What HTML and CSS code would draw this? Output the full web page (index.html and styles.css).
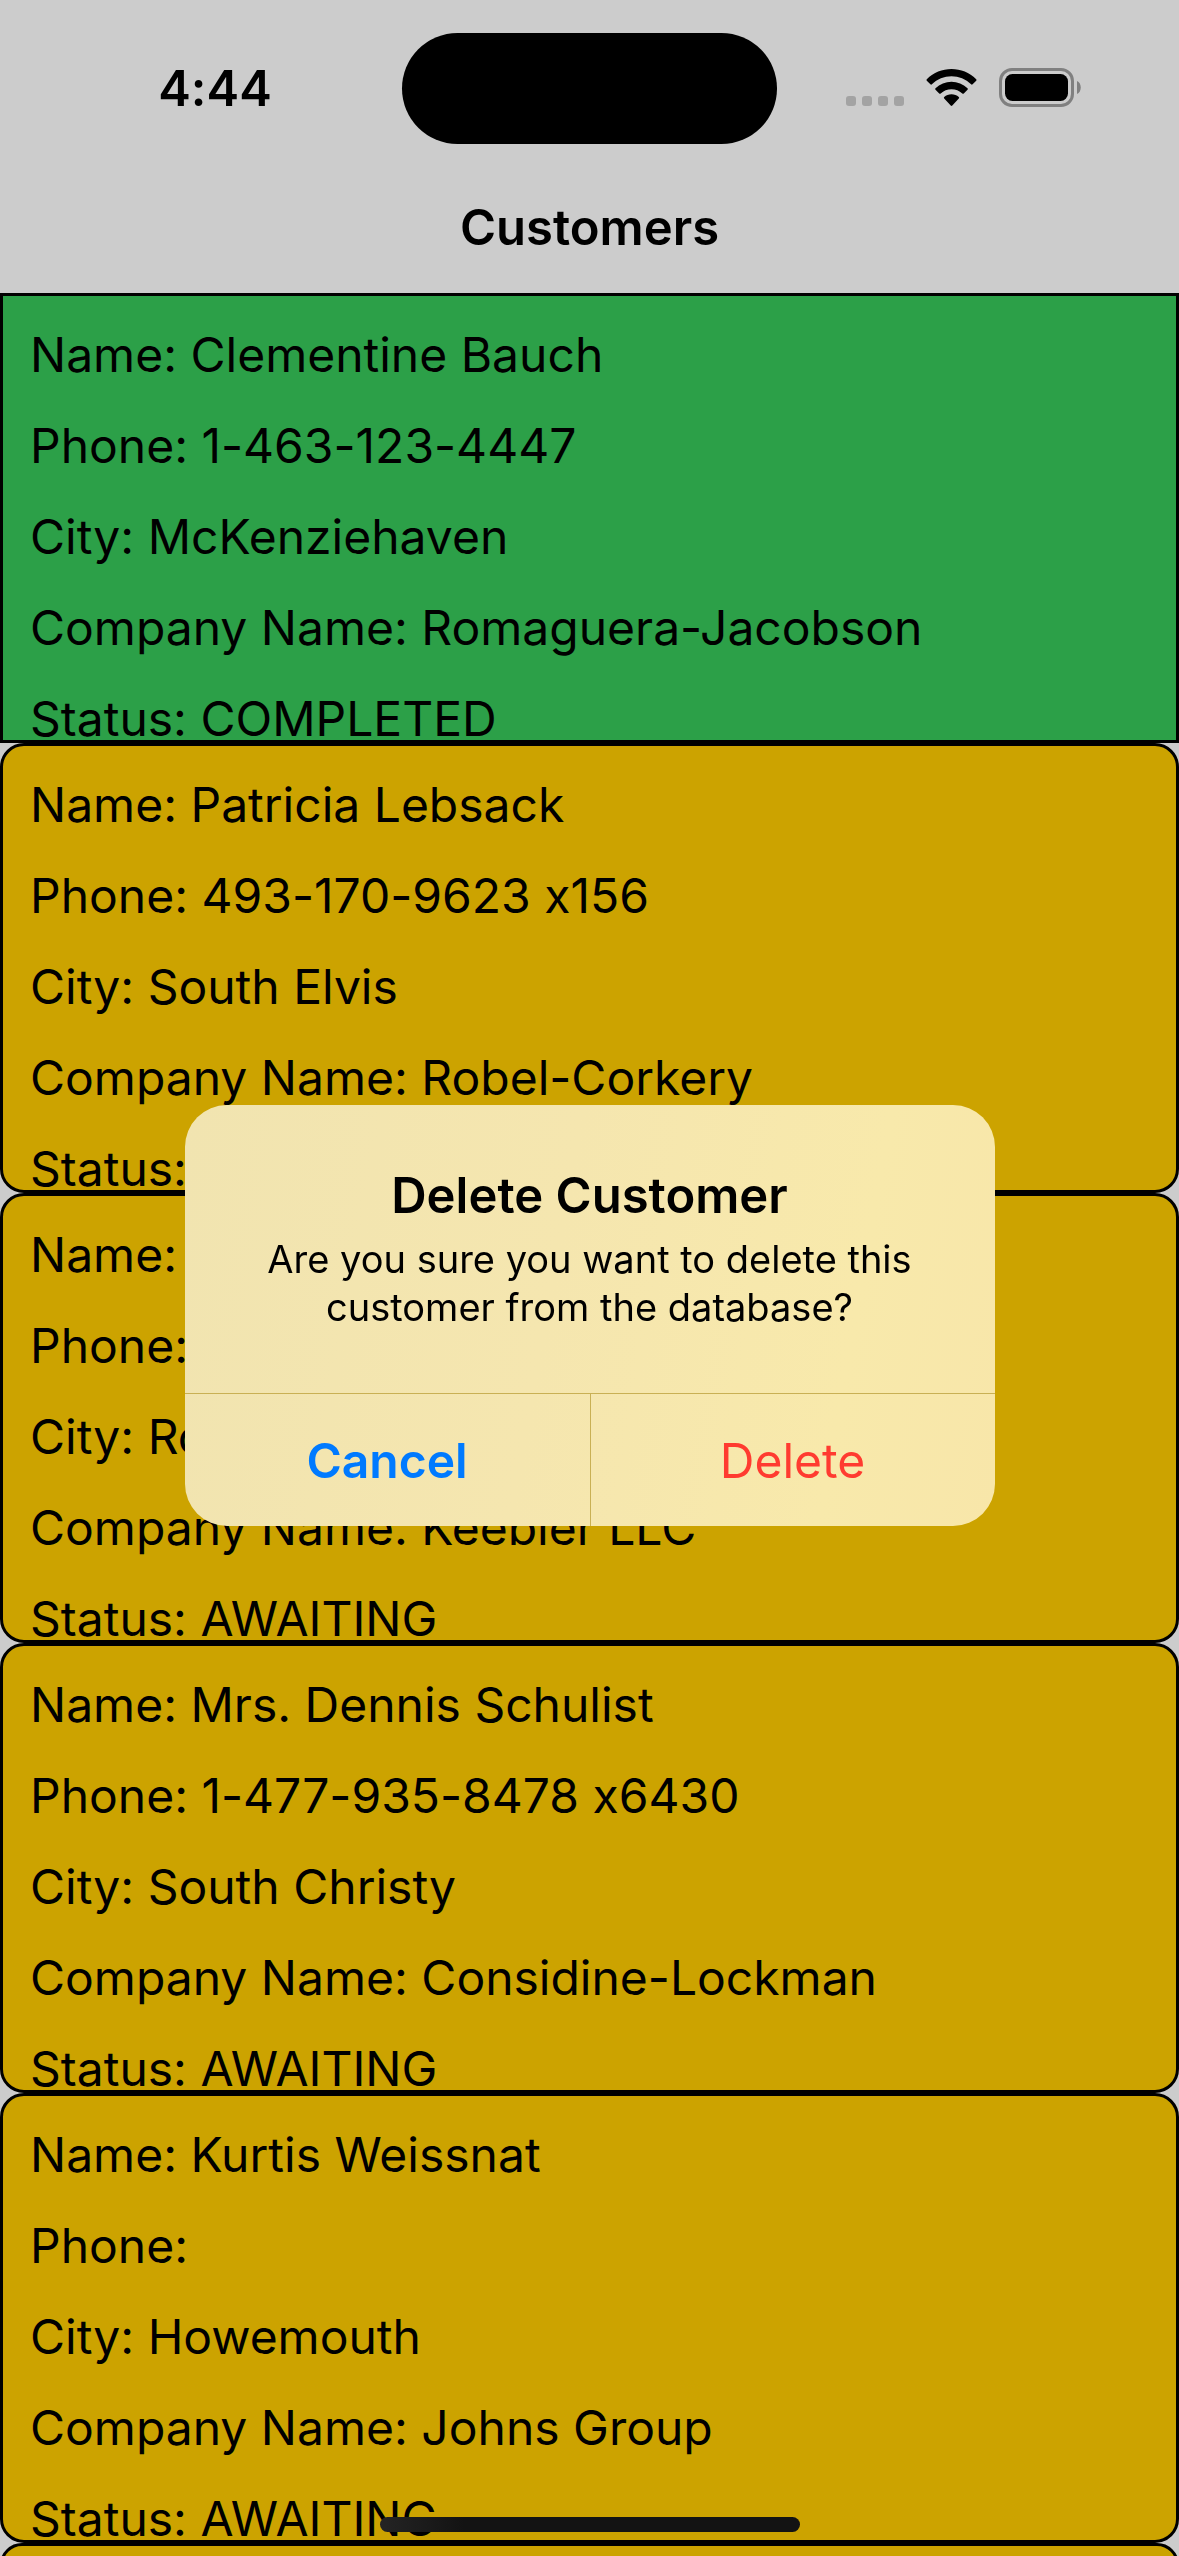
FILE: index.html
```html
<!DOCTYPE html>
<html lang="en">
<head>
<meta charset="utf-8">
<meta name="viewport" content="width=device-width, initial-scale=1">
<title>Customers</title>
<link rel="stylesheet" href="styles.css">
</head>
<body>
<div class="screen">
  <div class="status-bar">
    <time class="clock">4:44</time>
    <div class="island"></div>
    <div class="indicators">
      <svg width="58" height="39" viewBox="0 0 58 39" fill="#a3a3a3" aria-hidden="true">
        <rect x="0" y="28" width="10" height="10" rx="3"/>
        <rect x="16" y="28" width="10" height="10" rx="3"/>
        <rect x="32" y="28" width="10" height="10" rx="3"/>
        <rect x="48" y="28" width="10" height="10" rx="3"/>
      </svg>
      <svg width="51" height="39" viewBox="0 0 51 39" aria-hidden="true">
        <path d="M.8 11.2C7.6 4.6 16.2 1 25.5 1s17.900 3.600 24.700 10.200c.5.500.5 1.100 0 1.600L46.600 16.300c-.5.500-1 .5-1.500 0C39.700 11.200 32.900 8.300 25.500 8.300S11.300 11.200 5.900 16.300c-.5.500-1 .5-1.500 0L.8 12.800c-.5-.5-.5-1.100 0-1.600z"/>
        <path d="M9.500 20.200C13.900 16.100 19.500 13.800 25.500 13.800s11.600 2.300 16 6.400c.5.500.5 1 0 1.500l-3.700 3.700c-.5.500-1 .5-1.500 0C33.400 22.700 29.600 21.200 25.500 21.200s-7.900 1.500-10.800 4.200c-.5.500-1 .5-1.500 0L9.500 21.700c-.5-.5-.5-1 0-1.500z"/>
        <path d="M18.200 29C20.200 27.200 22.700 26.200 25.500 26.200s5.300 1 7.300 2.800c.5.500.5 1 0 1.500l-6.500 7c-.5.500-1.100.5-1.600 0l-6.500-7c-.5-.5-.5-1 0-1.500z"/>
      </svg>
      <svg width="82" height="39" viewBox="0 0 82 39" aria-hidden="true">
        <rect x="1.500" y="1.500" width="72" height="36" rx="11.500" fill="none" stroke="#808080" stroke-width="3"/>
        <rect x="6" y="6" width="63" height="27" rx="7.500"/>
        <path d="M78 13c5 2 5 11 0 13z" fill="#808080"/>
      </svg>
    </div>
  </div>
  <header class="nav-bar">
    <h1 class="nav-title">Customers</h1>
  </header>
  <ul class="customers">
    <li class="card card-completed">
      <p>Name: Clementine Bauch</p>
      <p>Phone: 1-463-123-4447</p>
      <p>City: McKenziehaven</p>
      <p>Company Name: Romaguera-Jacobson</p>
      <p>Status: COMPLETED</p>
    </li>
    <li class="card">
      <p>Name: Patricia Lebsack</p>
      <p>Phone: 493-170-9623 x156</p>
      <p>City: South Elvis</p>
      <p>Company Name: Robel-Corkery</p>
      <p>Status:</p>
    </li>
    <li class="card">
      <p>Name:</p>
      <p>Phone:</p>
      <p>City: Ro</p>
      <p>Company Name: Keebler LLC</p>
      <p>Status: AWAITING</p>
    </li>
    <li class="card">
      <p>Name: Mrs. Dennis Schulist</p>
      <p>Phone: 1-477-935-8478 x6430</p>
      <p>City: South Christy</p>
      <p>Company Name: Considine-Lockman</p>
      <p>Status: AWAITING</p>
    </li>
    <li class="card">
      <p>Name: Kurtis Weissnat</p>
      <p>Phone:</p>
      <p>City: Howemouth</p>
      <p>Company Name: Johns Group</p>
      <p>Status: AWAITING</p>
    </li>
    <li class="card"></li>
  </ul>
</div>
<div class="overlay">
  <section class="alert" role="alertdialog" aria-labelledby="alert-title" aria-describedby="alert-message">
    <div class="alert-body">
      <h2 class="alert-title" id="alert-title">Delete Customer</h2>
      <p class="alert-message" id="alert-message">Are you sure you want to delete this customer from the database?</p>
    </div>
    <div class="alert-actions">
      <button class="action action-cancel" type="button">Cancel</button>
      <button class="action action-delete" type="button">Delete</button>
    </div>
  </section>
</div>
<div class="home-indicator"></div>
</body>
</html>
```

FILE: styles.css
```css
* {
  box-sizing: border-box;
}

body,
h1,
h2,
p,
ul {
  margin: 0;
  padding: 0;
}

body {
  background: #cccccc;
  color: #000;
  font-family: Inter, "Liberation Sans", sans-serif;
  font-size: 48px;
  font-feature-settings: "calt" 0;
}

.screen {
  display: flex;
  flex-direction: column;
  height: 100vh;
  overflow: hidden;
}

.status-bar {
  display: grid;
  grid-template-columns: 1fr 375px 1fr;
  align-items: center;
  flex: none;
  height: 177px;
}

.clock {
  padding-left: 28px;
  font-size: 49px;
  font-weight: 600;
  text-align: center;
}

.island {
  height: 111px;
  border-radius: 56px;
  background: #000;
}

.indicators {
  display: flex;
  justify-content: center;
  gap: 22px;
  padding: 0 30px 2px 0;
}

.nav-bar {
  flex: none;
  padding-bottom: 14px;
}

.nav-title {
  font-size: 49px;
  font-weight: 600;
  line-height: 102px;
  text-align: center;
}

.customers {
  flex: 1;
  min-height: 0;
  overflow: hidden;
  list-style: none;
}

.card {
  display: grid;
  gap: 49px;
  padding: 38px 27px 0;
  border: 3px solid #000;
  border-radius: 24px;
  background: #cca300;
  line-height: 42px;
  white-space: nowrap;
}

.card-completed {
  border-radius: 0;
  background: #2ca048;
}

.overlay {
  position: fixed;
  inset: 0;
  display: flex;
  align-items: center;
  justify-content: center;
  padding: 177px 48px 102px;
}

.alert {
  width: 100%;
  max-width: 810px;
  overflow: hidden;
  border-radius: 42px;
  background: linear-gradient(100deg, #f1e4b0, #f5e6af 45%, #f8e9ab 80%, #f8e6a9);
  text-align: center;
}

.alert-body {
  padding: 60px 48px 62px;
}

.alert-title {
  font-size: 49px;
  font-weight: 600;
  line-height: 62px;
}

.alert-message {
  padding-top: 8px;
  font-size: 38px;
  line-height: 48px;
}

.alert-actions {
  display: grid;
  grid-template-columns: 1fr 1fr;
  border-top: 1px solid #c9b054;
}

.action {
  height: 132px;
  padding: 0;
  border: 0;
  background: none;
  font: inherit;
}

.action-cancel {
  color: #007aff;
  font-weight: 600;
}

.action-delete {
  border-left: 1px solid #c9b054;
  color: #ff3b30;
}

.home-indicator {
  position: fixed;
  bottom: 24px;
  left: 50%;
  width: 420px;
  height: 15px;
  margin-left: -210px;
  border-radius: 8px;
  background: linear-gradient(90deg, #242424, #131313 20%);
}
```
